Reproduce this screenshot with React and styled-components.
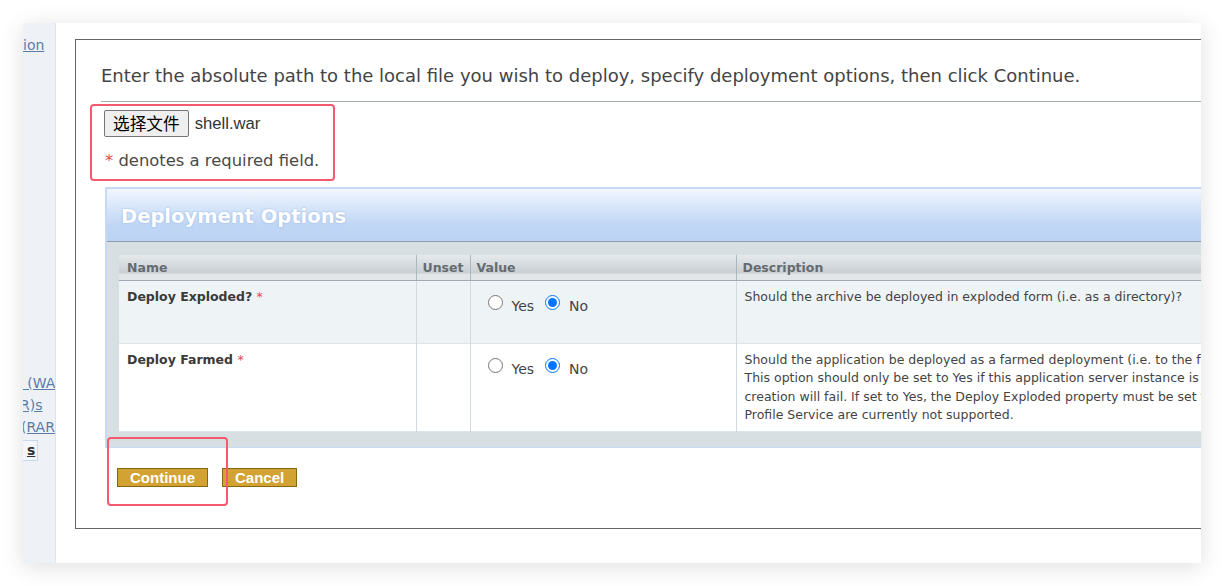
import React from 'react';
import styled, { createGlobalStyle } from 'styled-components';

const GlobalStyle = createGlobalStyle`
  body {
    margin: 0;
    background: #ffffff;
    font-family: 'DejaVu Sans', Verdana, sans-serif;
  }
`;

const navLinks = [
  { text: 'n (WAR)s', shift: -9 },
  { text: 'R)s', shift: -3 },
  { text: '(RAR)s', shift: -2 },
];

const options = [
  {
    name: 'Deploy Exploded?',
    height: 63,
    shade: true,
    lines: ['Should the archive be deployed in exploded form (i.e. as a directory)?'],
  },
  {
    name: 'Deploy Farmed',
    height: 87,
    shade: false,
    lines: [
      'Should the application be deployed as a farmed deployment (i.e. to the farm directory)?',
      'This option should only be set to Yes if this application server instance is part of a cluster, otherwise the deployment',
      'creation will fail. If set to Yes, the Deploy Exploded property must be set to No, since exploded deployments via the',
      'Profile Service are currently not supported.',
    ],
  },
];

const App = () => {
  return (
    <Page>
      <GlobalStyle />
      <Card>
        <Sidebar>
          <NavLink shift={0}>ion</NavLink>
          <NavGroup>
            {navLinks.map((l) => (
              <NavLink key={l.text} shift={l.shift}>
                {l.text}
              </NavLink>
            ))}
            <ActiveLink>s</ActiveLink>
          </NavGroup>
        </Sidebar>

        <Main>
          <Panel>
            <Intro>
              Enter the absolute path to the local file you wish to deploy, specify deployment options, then click
              Continue.
            </Intro>
            <Rule />

            <FileArea>
              <FileRow>
                <FileButton type="button">选择文件</FileButton>
                <FileName>shell.war</FileName>
              </FileRow>
              <Required>
                <Star>*</Star> denotes a required field.
              </Required>
              <Mark left={-11} top={2} width={245} height={77} />
            </FileArea>

            <OptionsBox>
              <OptionsHeader>Deployment Options</OptionsHeader>
              <OptionsBody>
                <Table>
                  <colgroup>
                    <col style={{ width: 297 }} />
                    <col style={{ width: 54 }} />
                    <col style={{ width: 266 }} />
                    <col style={{ width: 640 }} />
                  </colgroup>
                  <thead>
                    <tr>
                      <Th>Name</Th>
                      <Th>Unset</Th>
                      <Th>Value</Th>
                      <Th>Description</Th>
                    </tr>
                  </thead>
                  <tbody>
                    {options.map((o) => (
                      <Row key={o.name} shade={o.shade} rowHeight={o.height}>
                        <NameCell>
                          {o.name} <Star>*</Star>
                        </NameCell>
                        <Td />
                        <ValueCell>
                          <RadioGroup>
                            <Radio type="radio" name={o.name} />
                            <RadioLabel>Yes</RadioLabel>
                            <Radio type="radio" name={o.name} defaultChecked />
                            <RadioLabel>No</RadioLabel>
                          </RadioGroup>
                        </ValueCell>
                        <DescCell>
                          {o.lines.map((line) => (
                            <DescLine key={line}>{line}</DescLine>
                          ))}
                        </DescCell>
                      </Row>
                    ))}
                  </tbody>
                </Table>
              </OptionsBody>
            </OptionsBox>

            <Actions>
              <ActionButton type="button">Continue</ActionButton>
              <ActionButton type="button">Cancel</ActionButton>
              <Mark left={-10} top={-31} width={121} height={69} />
            </Actions>
          </Panel>
        </Main>
      </Card>
    </Page>
  );
};

export default App;

const Page = styled.div`
  width: 1224px;
  height: 586px;
  padding: 23px 0 0 23px;
  box-sizing: border-box;
  overflow: hidden;
`;

const Card = styled.div`
  width: 1178px;
  height: 540px;
  display: flex;
  overflow: hidden;
  background: #ffffff;
  box-shadow: 0 4px 22px rgba(0, 0, 0, 0.13);
`;

const Sidebar = styled.div`
  width: 32px;
  flex-shrink: 0;
  background: #eef2f6;
  border-right: 1px solid #dde4eb;
  overflow: hidden;
  padding-top: 11px;
  box-sizing: content-box;
  display: flex;
  flex-direction: column;
`;

const NavGroup = styled.div`
  margin-top: 316px;
  display: flex;
  flex-direction: column;
`;

const NavLink = styled.a`
  display: block;
  white-space: nowrap;
  font-size: 14px;
  line-height: 22px;
  color: #5a7ca6;
  text-decoration: underline;
  margin-left: ${(p) => p.shift}px;
`;

const ActiveLink = styled.a`
  display: block;
  width: 10px;
  margin: 2px 0 0 -3px;
  padding-left: 6px;
  white-space: nowrap;
  font-size: 14px;
  font-weight: bold;
  line-height: 19px;
  color: #333333;
  text-decoration: underline;
  border: 1px solid #c8d8ec;
  background: #f3f6fa;
`;

const Main = styled.div`
  flex: 1;
  min-width: 0;
  padding: 16px 0 0 19px;
`;

const Panel = styled.div`
  width: 1300px;
  height: 490px;
  box-sizing: border-box;
  border: 1px solid #5f6468;
  padding: 25px 0 0 25px;
`;

const Intro = styled.p`
  margin: 0;
  font-size: 18px;
  line-height: 22px;
  color: #444444;
  white-space: nowrap;
`;

const Rule = styled.div`
  height: 1px;
  background: #a6adb4;
  margin-top: 14px;
`;

const FileArea = styled.div`
  position: relative;
  padding-top: 8px;
`;

const FileRow = styled.div`
  display: flex;
  align-items: center;
  gap: 6px;
  margin-left: 3px;
`;

const FileButton = styled.button`
  height: 27px;
  padding: 0 8px;
  font-family: 'Noto Sans CJK SC', sans-serif;
  font-size: 16.67px;
  line-height: 25px;
  color: #000000;
  background: #efefef;
  border: 1px solid #767676;
  border-radius: 2px;
`;

const FileName = styled.span`
  font-family: 'Liberation Sans', Arial, sans-serif;
  font-size: 16.67px;
  color: #333333;
`;

const Required = styled.p`
  margin: 13px 0 0 4px;
  font-size: 16.4px;
  line-height: 21px;
  color: #4a4a4a;
`;

const Star = styled.span`
  color: #e2485a;
  font-weight: normal;
`;

const Mark = styled.div`
  position: absolute;
  left: ${(p) => p.left}px;
  top: ${(p) => p.top}px;
  width: ${(p) => p.width}px;
  height: ${(p) => p.height}px;
  box-sizing: border-box;
  border: 2px solid #f35a6e;
  border-radius: 4px;
  pointer-events: none;
`;

const OptionsBox = styled.div`
  margin: 16px 0 0 4px;
  border: 2px solid #c7daf2;
  border-right: none;
  border-bottom-width: 1px;
`;

const OptionsHeader = styled.div`
  height: 53px;
  display: flex;
  align-items: center;
  padding: 2px 0 0 14px;
  box-sizing: border-box;
  font-size: 19.5px;
  font-weight: bold;
  color: #ffffff;
  text-shadow: 0 0 2px rgba(110, 150, 210, 0.7);
  background: linear-gradient(to bottom, #f1f6fd 0%, #d7e6fa 35%, #c0d6f5 70%, #bcd3f4 100%);
  border-bottom: 1px solid #8d9caa;
`;

const OptionsBody = styled.div`
  background: #d8dfe3;
  padding: 13px 0 15px 12px;
`;

const Table = styled.table`
  border-collapse: collapse;
  table-layout: fixed;
  width: 1257px;
`;

const Th = styled.th`
  height: 25px;
  padding: 0 6px;
  text-align: left;
  font-size: 12.5px;
  font-weight: bold;
  color: #656b70;
  background: linear-gradient(
    to bottom,
    #e5e9ec 0%,
    #d3d9dd 45%,
    #c8ced2 72%,
    #e2e6e9 76%,
    #e2e6e9 100%
  );
  border-left: 1px solid #aeb8bf;
  border-bottom: 1px solid #9ea9b1;

  &:first-child {
    border-left: none;
    padding-left: 8px;
  }
`;

const Row = styled.tr`
  height: ${(p) => p.rowHeight}px;
  background: ${(p) => (p.shade ? '#eef3f6' : '#ffffff')};
  border-bottom: 1px solid #dde4ea;
`;

const Td = styled.td`
  vertical-align: top;
  padding: 7px 8px;
  border-left: 1px solid #d3dbe1;
  font-size: 12.5px;
  line-height: 18.3px;
  color: #444444;

  &:first-child {
    border-left: none;
  }
`;

const NameCell = styled(Td)`
  font-weight: bold;
  color: #3a3a3a;
`;

const ValueCell = styled(Td)`
  padding: 14px 0 0 17px;
`;

const RadioGroup = styled.div`
  display: flex;
  align-items: flex-start;
`;

const Radio = styled.input`
  width: 15px;
  height: 15px;
  margin: 0;
`;

const RadioLabel = styled.span`
  margin: 3px 11px 0 9px;
  font-size: 14px;
  line-height: 16px;
  color: #444444;
`;

const DescCell = styled(Td)``;

const DescLine = styled.div`
  white-space: nowrap;
`;

const Actions = styled.div`
  position: relative;
  display: flex;
  gap: 14px;
  margin: 20px 0 0 16px;
`;

const ActionButton = styled.button`
  height: 19px;
  padding: 0 12px;
  font-family: 'Liberation Sans', Arial, sans-serif;
  font-size: 15px;
  font-weight: bold;
  line-height: 17px;
  color: #ffffff;
  background: #d2a232;
  border: 1px solid #876610;
  border-radius: 0;
`;
